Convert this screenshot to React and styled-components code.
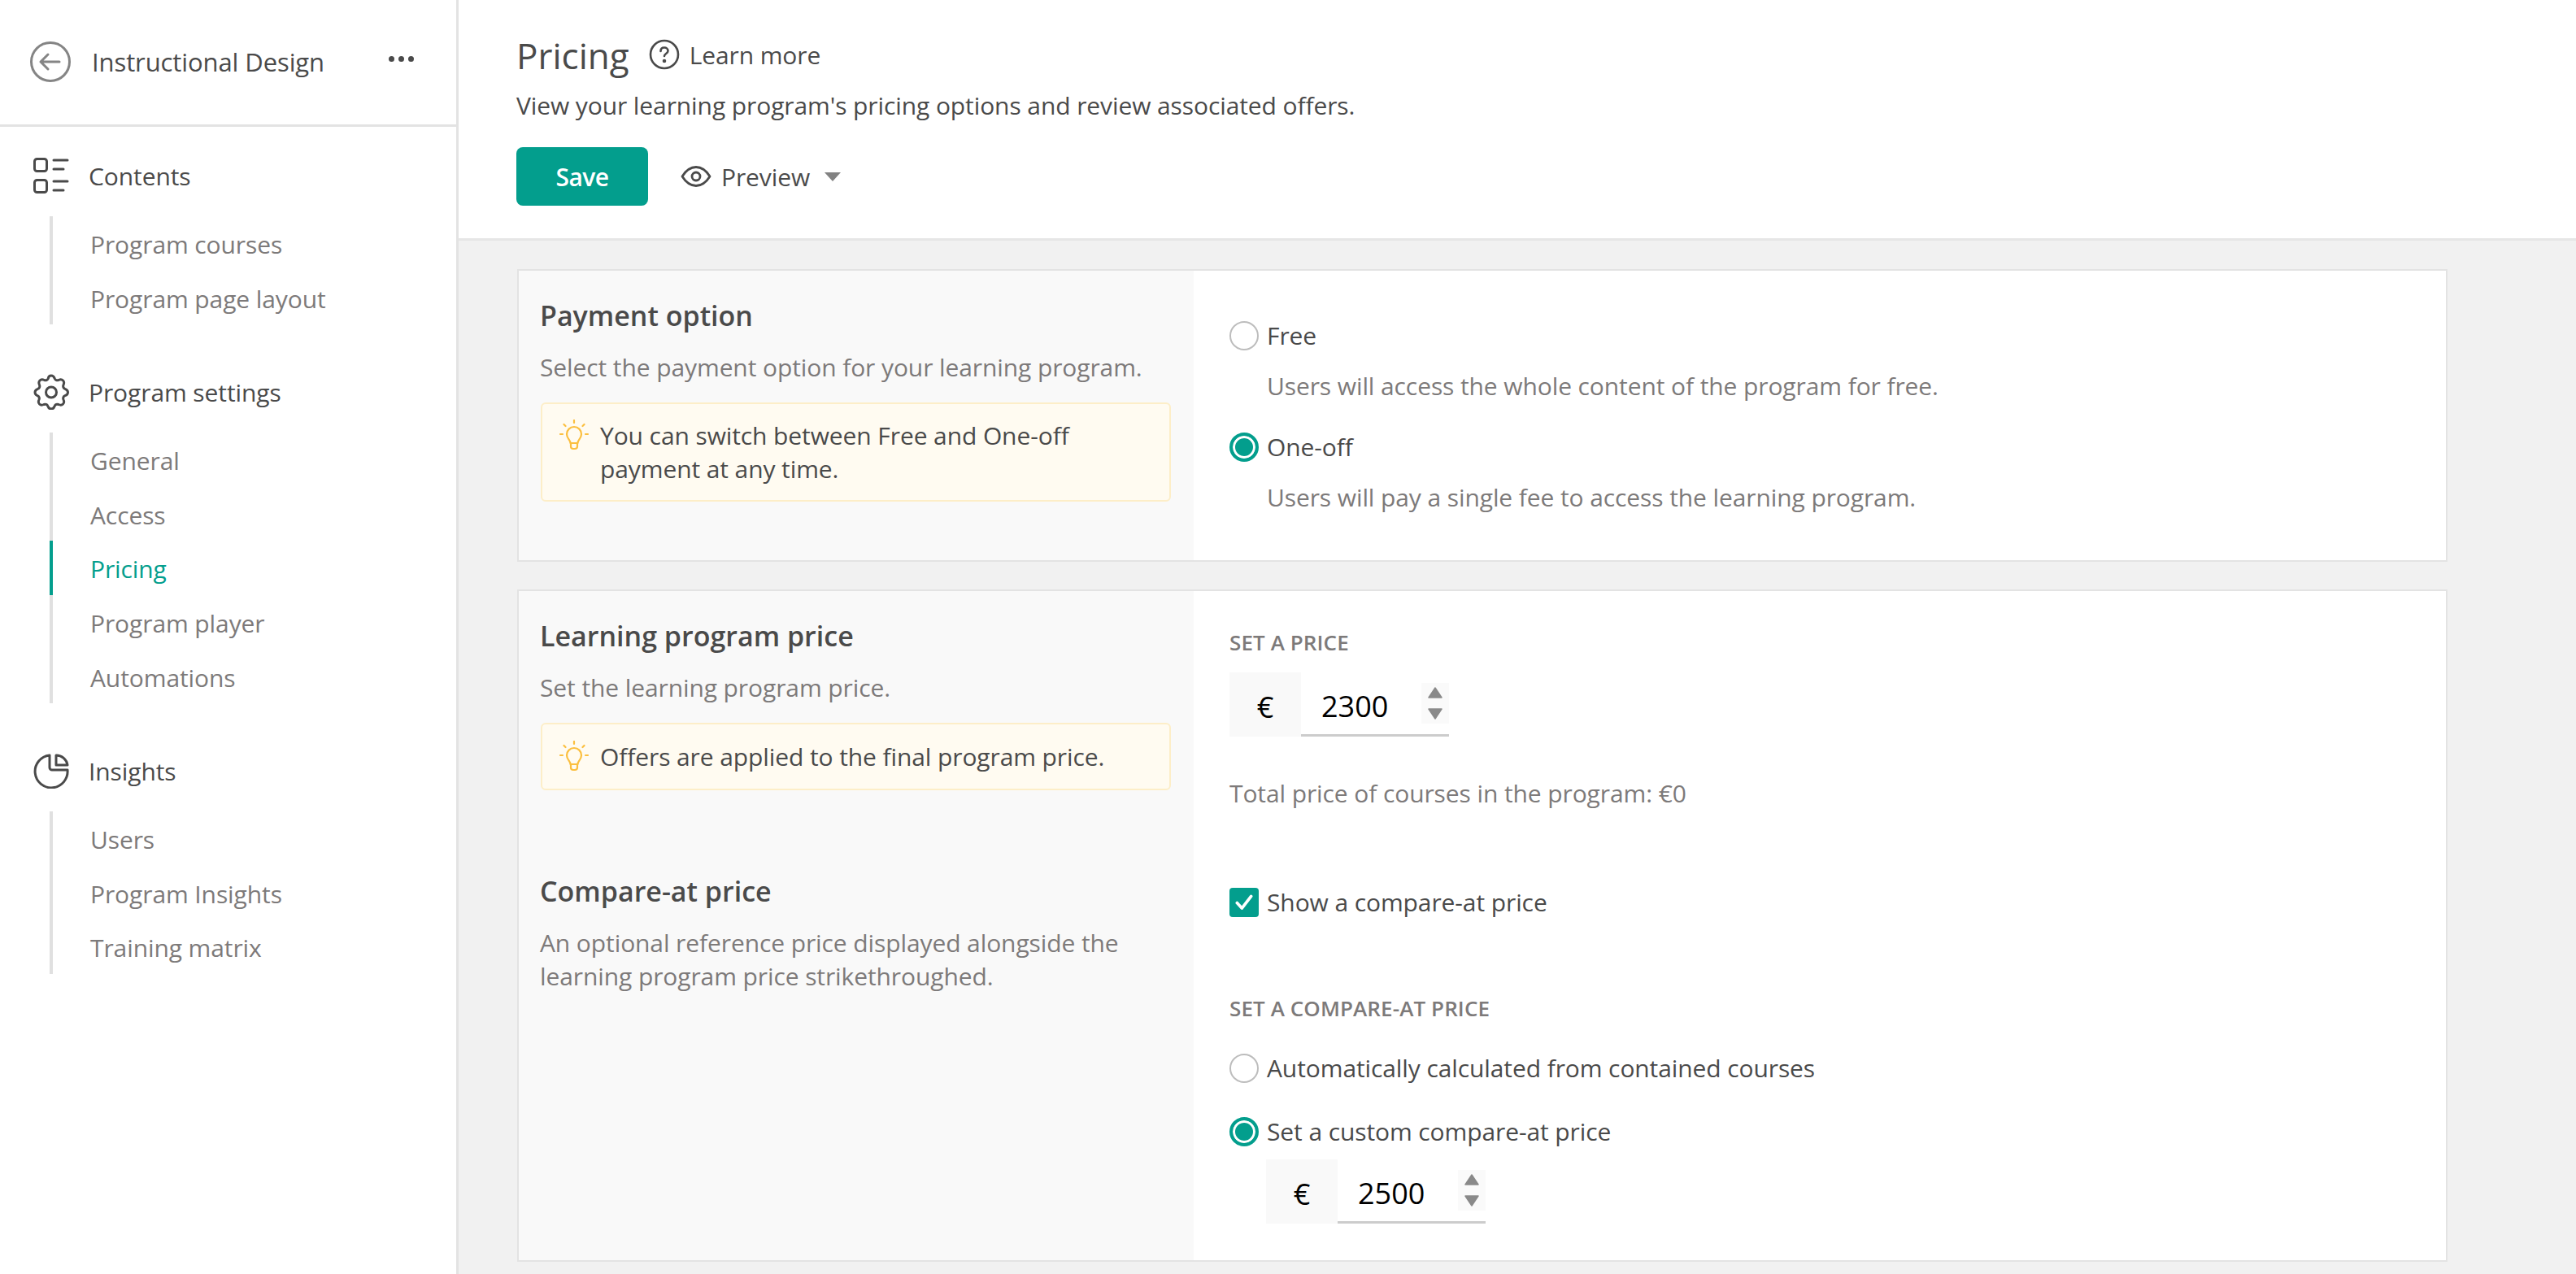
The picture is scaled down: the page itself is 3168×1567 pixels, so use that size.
import React from 'react'
import styled, { createGlobalStyle } from 'styled-components'

const GlobalStyle = createGlobalStyle`
  html, body { margin: 0; padding: 0; height: 100%; overflow: hidden; background: #fff; }
  body { font-family: "Open Sans", "Noto Sans", sans-serif; font-size: 30px; color: #4a4a4a; letter-spacing: -0.1px; }
  * { box-sizing: border-box; }
`

const TEAL = '#039e8d'

const Shell = styled.div`
  display: grid;
  grid-template-columns: 564px 1fr;
  height: 1567px;
  overflow: hidden;
`

const Sidebar = styled.aside`
  border-right: 3px solid #e3e3e3;
`

const SideHeader = styled.div`
  display: flex;
  align-items: center;
  height: 156px;
  padding: 0 52px 2px 37px;
  border-bottom: 3px solid #e3e3e3;
  font-size: 31px;
`

const BackIcon = styled.svg`
  width: 50px;
  height: 50px;
  margin-right: 26px;
  flex: none;
`

const SideTitle = styled.span`
  flex: 1;
`

const Dots = styled.div`
  display: flex;
  gap: 5px;
  margin-top: -6px;
  i {
    width: 7px;
    height: 7px;
    border-radius: 50%;
    background: #4a4a4a;
  }
`

const Nav = styled.nav`
  padding: 35px 0 0 41px;
`

const NavGroup = styled.div`
  margin-bottom: 58px;
`

const NavHead = styled.div`
  display: flex;
  align-items: center;
  height: 50px;
  gap: 24px;
  svg {
    width: 44px;
    height: 44px;
    flex: none;
  }
`

const NavItems = styled.div`
  margin: 25px 0 0 20px;
  border-left: 4px solid #e0e0e0;
`

const NavItem = styled.div`
  height: 66.6px;
  line-height: 69px;
  padding-left: 46px;
  margin-left: -4px;
  color: ${p => (p.$active ? TEAL : '#7d7a7a')};
  border-left: 4px solid ${p => (p.$active ? TEAL : 'transparent')};
`

const Main = styled.main`
  display: flex;
  flex-direction: column;
  min-width: 0;
`

const Header = styled.header`
  height: 296px;
  padding: 38px 0 0 71px;
  border-bottom: 3px solid #e6e6e6;
`

const TitleRow = styled.div`
  display: flex;
  align-items: center;
  height: 60px;
`

const PageTitle = styled.h1`
  margin: 0 24px 0 0;
  font-size: 44px;
  font-weight: 400;
  letter-spacing: 0;
`

const LearnMore = styled.div`
  display: flex;
  align-items: center;
  gap: 12px;
  margin-top: -2px;
  font-weight: 500;
  svg {
    width: 38px;
    height: 38px;
  }
`

const SubTitle = styled.p`
  margin: 11px 0 0;
  line-height: 41px;
`

const Actions = styled.div`
  display: flex;
  align-items: center;
  margin-top: 31px;
`

const SaveButton = styled.button`
  width: 162px;
  height: 72px;
  border: 0;
  border-radius: 8px;
  background: ${TEAL};
  color: #fff;
  font: 600 30px "Open Sans", sans-serif;
  letter-spacing: -0.5px;
`

const PreviewButton = styled.div`
  display: flex;
  align-items: center;
  margin-left: 40px;
  font-weight: 500;
  svg {
    width: 38px;
    height: 38px;
    margin-right: 12px;
  }
`

const Caret = styled.span`
  width: 0;
  height: 0;
  margin-left: 18px;
  border-left: 10px solid transparent;
  border-right: 10px solid transparent;
  border-top: 11px solid #828282;
`

const Content = styled.div`
  flex: 1;
  background: #f1f1f1;
  padding: 35px 0 0 72px;
`

const Card = styled.section`
  display: grid;
  grid-template-columns: 830px 1fr;
  width: 2374px;
  margin-bottom: 34px;
  border: 2px solid #e3e3e3;
  background: #fff;
`

const CardSide = styled.div`
  background: #f9f9f9;
  padding: 33px 28px 0 26px;
`

const CardBody = styled.div`
  padding: ${p => p.$top}px 44px ${p => p.$bottom}px;
`

const BlockTitle = styled.h2`
  margin: ${p => p.$mt || 0}px 0 0;
  font-size: 34px;
  font-weight: 600;
  line-height: 44px;
  letter-spacing: 0;
`

const SideDesc = styled.p`
  margin: 21px 0 23px;
  line-height: 41px;
  color: #7d7a7a;
`

const Tip = styled.div`
  display: flex;
  gap: 13px;
  padding: ${p => p.$pad}px 20px;
  margin-left: 1px;
  border: 2px solid #fdeec8;
  border-radius: 6px;
  background: #fffbf1;
  line-height: 41px;
  svg {
    width: 38px;
    height: 38px;
    margin-top: 1px;
    flex: none;
  }
`

const Choice = styled.label`
  display: flex;
  align-items: center;
  gap: 10px;
  height: 41px;
  margin-top: ${p => p.$mt || 0}px;
`

const Radio = styled.span`
  display: block;
  flex: none;
  width: 36px;
  height: 36px;
  border-radius: 50%;
  border: ${p => (p.$on ? `4px solid ${TEAL}` : '2px solid #bdbdbd')};
  background: ${p => (p.$on ? TEAL : '#fff')};
  box-shadow: ${p => (p.$on ? 'inset 0 0 0 3px #fff' : 'none')};
`

const CheckBox = styled.span`
  display: flex;
  align-items: center;
  justify-content: center;
  flex: none;
  width: 36px;
  height: 36px;
  border-radius: 4px;
  background: ${TEAL};
  svg {
    width: 26px;
    height: 26px;
  }
`

const ChoiceDesc = styled.p`
  margin: 21px 0 0 46px;
  line-height: 41px;
  color: #7d7a7a;
`

const SmallLabel = styled.div`
  margin-top: ${p => p.$mt || 0}px;
  font-size: 26px;
  font-weight: 600;
  line-height: 36px;
  color: #7d7a7a;
  letter-spacing: 0.1px;
`

const PriceField = styled.div`
  display: flex;
  width: 270px;
  height: 79px;
  margin: ${p => p.$mt || 0}px 0 0 ${p => p.$ml || 0}px;
`

const Currency = styled.span`
  display: flex;
  align-items: center;
  justify-content: center;
  width: 88px;
  padding-top: 6px;
  background: #f9f9f9;
  color: #000;
  font-size: 36px;
`

const PriceBox = styled.div`
  display: flex;
  align-items: center;
  flex: 1;
  padding-left: 25px;
  border-bottom: 3px solid #cccccc;
`

const PriceInput = styled.input`
  width: 123px;
  padding: 6px 0 0;
  border: 0;
  outline: 0;
  background: transparent;
  color: #000;
  font: 400 36px "Open Sans", sans-serif;
  letter-spacing: 0;
`

const Spinner = styled.div`
  display: flex;
  flex-direction: column;
  align-items: center;
  justify-content: space-between;
  width: 34px;
  height: 50px;
  padding: 5px 0;
  background: #fafafa;
  svg {
    width: 18px;
    height: 14px;
  }
`

const Total = styled.p`
  margin: 49px 0 0;
  line-height: 41px;
  color: #7d7a7a;
`

const BackArrow = () => (
  <BackIcon viewBox="0 0 50 50" fill="none" stroke="#858585" strokeWidth="3" strokeLinecap="round" strokeLinejoin="round">
    <circle cx="25" cy="25" r="23.5" />
    <path d="M13 25h23M22 16l-9 9 9 9" />
  </BackIcon>
)

const ContentsIcon = () => (
  <svg viewBox="0 0 44 44" fill="none" stroke="#4a4a4a" strokeWidth="3" strokeLinecap="round">
    <rect x="1.5" y="1.5" width="15" height="15" rx="3" />
    <rect x="1.5" y="27.5" width="15" height="15" rx="3" />
    <path d="M25 3h17M25 14h12M25 29h17M25 40h12" />
  </svg>
)

// scalloped cog, eight lobes round a small ring
const GearIcon = () => (
  <svg viewBox="0 0 44 44" fill="none" stroke="#4a4a4a" strokeWidth="3" strokeLinejoin="round">
    <path d="M22 2c2.500 0 3.500 1.500 4.200 3.500.8 2 2.800 2.800 4.800 2 2-.9 3.800-1.200 5.500.5s1.400 3.500.5 5.500c-.8 2 0 4 2 4.800 2 .7 3.500 1.700 3.500 4.200s-1.500 3.500-3.500 4.200c-2 .8-2.800 2.800-2 4.800.9 2 1.200 3.800-.5 5.500s-3.500 1.400-5.500.5c-2-.8-4 0-4.800 2-.7 2-1.700 3.500-4.200 3.500s-3.500-1.500-4.200-3.500c-.8-2-2.800-2.800-4.800-2-2 .9-3.800 1.200-5.500-.5s-1.400-3.500-.5-5.500c.8-2 0-4-2-4.800C3.500 26 2 25 2 22.500s1.500-3.500 3.500-4.200c2-.8 2.800-2.800 2-4.800-.9-2-1.200-3.800.5-5.500s3.500-1.400 5.500-.5c2 .8 4 0 4.800-2C18.500 3.500 19.500 2 22 2Z" />
    <circle cx="22" cy="22.500" r="6.500" />
  </svg>
)

const PieIcon = () => (
  <svg viewBox="0 0 44 44" fill="none" stroke="#4a4a4a" strokeWidth="3" strokeLinecap="round" strokeLinejoin="round">
    <path d="M20 3v15a3 3 0 0 0 3 3h19A20 20 0 1 1 20 3Z" />
    <path d="M28 3a14 14 0 0 1 14 12H28Z" />
  </svg>
)

const HelpIcon = () => (
  <svg viewBox="0 0 38 38" fill="none" stroke="#4a4a4a" strokeWidth="2.6" strokeLinecap="round">
    <circle cx="19" cy="19" r="17" />
    <path d="M14.500 15c0-3 2-4.500 4.500-4.500s4.500 1.700 4.500 4c0 3.500-4.500 3.500-4.500 6.500" />
    <circle cx="19" cy="27" r="1" fill="#4a4a4a" />
  </svg>
)

const EyeIcon = () => (
  <svg viewBox="0 0 38 38" fill="none" stroke="#4a4a4a" strokeWidth="2.8" strokeLinejoin="round">
    <path d="M2 19C7 11 12 7.500 19 7.500S31 11 36 19c-5 8-10 11.500-17 11.500S7 27 2 19Z" />
    <circle cx="19" cy="19" r="5" />
  </svg>
)

const BulbIcon = () => (
  <svg viewBox="0 0 38 38" fill="none" stroke="#fbbf3f" strokeWidth="2.2" strokeLinecap="round" strokeLinejoin="round">
    <path d="M19 1v3M6.500 6l2 2M31.500 6l-2 2M2 18h3M33 18h3" />
    <path d="M14.500 29c0-4-4.500-5.500-4.500-11a9 9 0 0 1 18 0c0 5.500-4.500 7-4.500 11Z" />
    <path d="M15 29v4a3 3 0 0 0 3 3h2a3 3 0 0 0 3-3v-4" />
  </svg>
)

const CheckMark = () => (
  <svg viewBox="0 0 24 24" fill="none" stroke="#fff" strokeWidth="3.4" strokeLinecap="round" strokeLinejoin="round">
    <path d="M4 12.500l5.500 6L20 5" />
  </svg>
)

const Arrows = () => (
  <Spinner>
    <svg viewBox="0 0 18 14"><path d="M9 1l8 12H1Z" fill="#8a8a8a" stroke="#8a8a8a" strokeWidth="1.500" strokeLinejoin="round" /></svg>
    <svg viewBox="0 0 18 14"><path d="M9 13L1 1h16Z" fill="#8a8a8a" stroke="#8a8a8a" strokeWidth="1.500" strokeLinejoin="round" /></svg>
  </Spinner>
)

const navGroups = [
  { title: 'Contents', icon: <ContentsIcon />, items: ['Program courses', 'Program page layout'] },
  { title: 'Program settings', icon: <GearIcon />, items: ['General', 'Access', 'Pricing', 'Program player', 'Automations'] },
  { title: 'Insights', icon: <PieIcon />, items: ['Users', 'Program Insights', 'Training matrix'] },
]

const App = () => {
  return (
    <Shell>
      <GlobalStyle />
      <Sidebar>
        <SideHeader>
          <BackArrow />
          <SideTitle>Instructional Design</SideTitle>
          <Dots><i /><i /><i /></Dots>
        </SideHeader>
        <Nav>
          {navGroups.map((group) => (
            <NavGroup key={group.title}>
              <NavHead>{group.icon}{group.title}</NavHead>
              <NavItems>
                {group.items.map((item) => (
                  <NavItem key={item} $active={item === 'Pricing'}>{item}</NavItem>
                ))}
              </NavItems>
            </NavGroup>
          ))}
        </Nav>
      </Sidebar>
      <Main>
        <Header>
          <TitleRow>
            <PageTitle>Pricing</PageTitle>
            <LearnMore><HelpIcon />Learn more</LearnMore>
          </TitleRow>
          <SubTitle>View your learning program's pricing options and review associated offers.</SubTitle>
          <Actions>
            <SaveButton>Save</SaveButton>
            <PreviewButton><EyeIcon />Preview<Caret /></PreviewButton>
          </Actions>
        </Header>
        <Content>
          <Card>
            <CardSide>
              <BlockTitle>Payment option</BlockTitle>
              <SideDesc>Select the payment option for your learning program.</SideDesc>
              <Tip $pad={18}><BulbIcon /><span>You can switch between Free and One-off payment at any time.</span></Tip>
            </CardSide>
            <CardBody $top={59} $bottom={57}>
              <Choice><Radio />Free</Choice>
              <ChoiceDesc>Users will access the whole content of the program for free.</ChoiceDesc>
              <Choice $mt={34}><Radio $on />One-off</Choice>
              <ChoiceDesc>Users will pay a single fee to access the learning program.</ChoiceDesc>
            </CardBody>
          </Card>
          <Card>
            <CardSide>
              <BlockTitle>Learning program price</BlockTitle>
              <SideDesc>Set the learning program price.</SideDesc>
              <Tip $pad={19}><BulbIcon /><span>Offers are applied to the final program price.</span></Tip>
              <BlockTitle $mt={102}>Compare-at price</BlockTitle>
              <SideDesc>An optional reference price displayed alongside the learning program price strikethroughed.</SideDesc>
            </CardSide>
            <CardBody $top={45} $bottom={45}>
              <SmallLabel>SET A PRICE</SmallLabel>
              <PriceField $mt={19}>
                <Currency>€</Currency>
                <PriceBox><PriceInput readOnly value="2300" /><Arrows /></PriceBox>
              </PriceField>
              <Total>Total price of courses in the program: €0</Total>
              <Choice $mt={93}><CheckBox><CheckMark /></CheckBox>Show a compare-at price</Choice>
              <SmallLabel $mt={92}>SET A COMPARE-AT PRICE</SmallLabel>
              <Choice $mt={35}><Radio />Automatically calculated from contained courses</Choice>
              <Choice $mt={37}><Radio $on />Set a custom compare-at price</Choice>
              <PriceField $mt={14} $ml={45}>
                <Currency>€</Currency>
                <PriceBox><PriceInput readOnly value="2500" /><Arrows /></PriceBox>
              </PriceField>
            </CardBody>
          </Card>
        </Content>
      </Main>
    </Shell>
  )
}

export default App
